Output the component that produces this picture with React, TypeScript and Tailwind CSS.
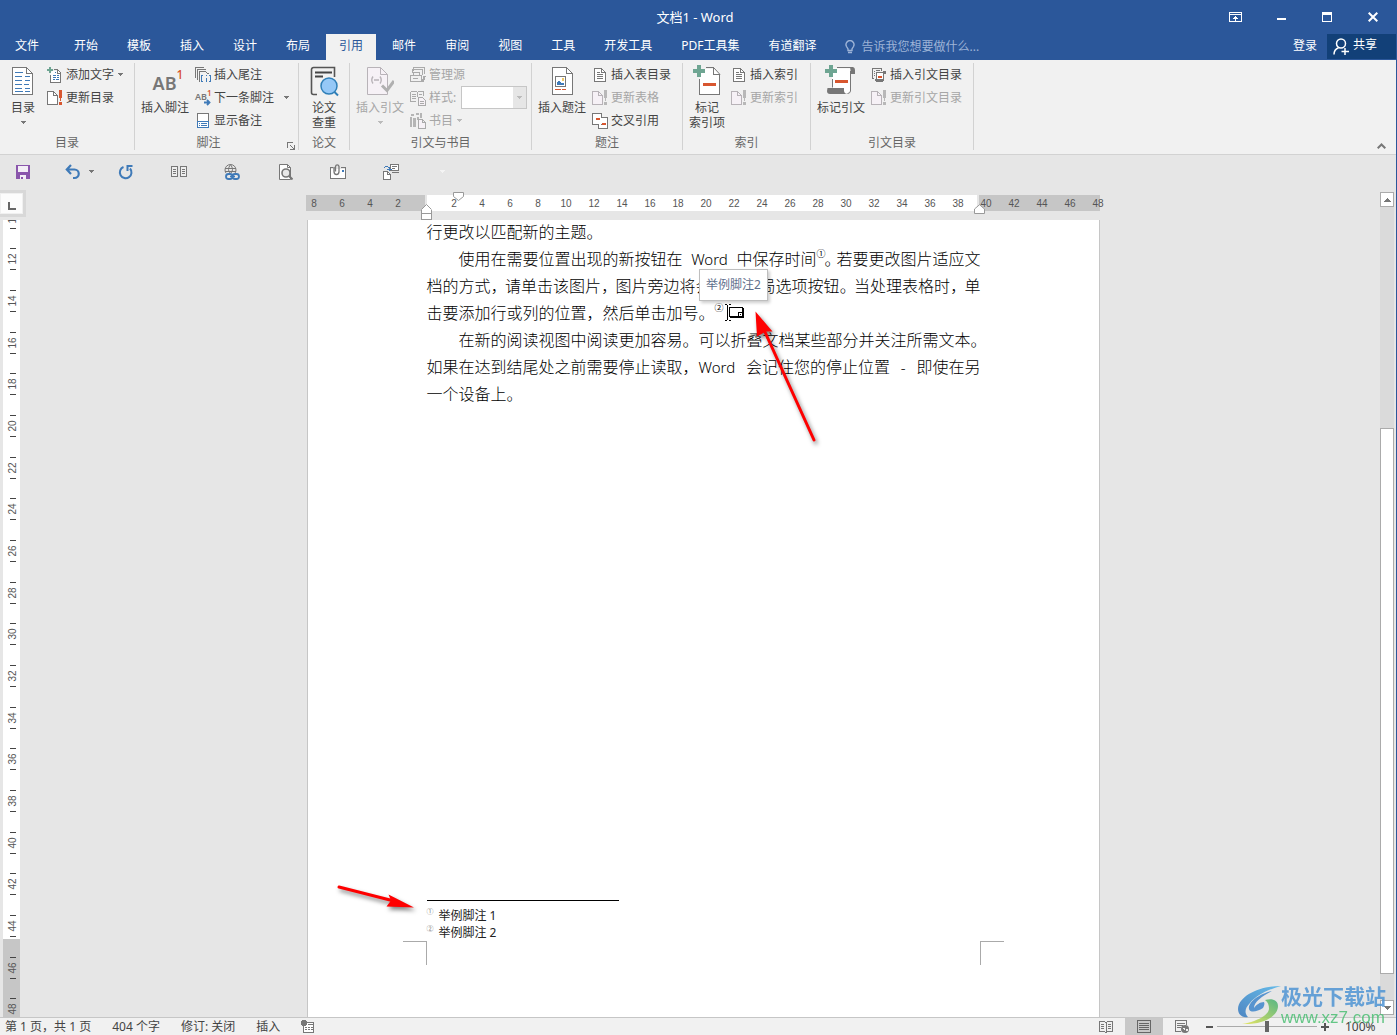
import type { ReactNode } from "react";
import clsx from "clsx";

const tabs = ["开始", "模板", "插入", "设计", "布局", "引用", "邮件", "审阅", "视图", "工具", "开发工具", "PDF工具集", "有道翻译"];

const GRAY = "#777777";
const DIM = "#b8b3b8";
const BLUE = "#3f7ab8";
const RED = "#d8562f";
const GREEN = "#6ea592";

/* ---------- shared bits ---------- */

function Svg({ w = 16, h = 16, smooth, className, children }: { w?: number; h?: number; smooth?: boolean; className?: string; children: ReactNode }) {
  return (
    <svg width={w} height={h} viewBox={`0 0 ${w} ${h}`} fill="none" shapeRendering={smooth ? "auto" : "crispEdges"} className={clsx("shrink-0", className)} aria-hidden="true">
      {children}
    </svg>
  );
}

function Caret({ className = "text-[#777]" }: { className?: string }) {
  return (
    <Svg w={5} h={3} className={className}>
      <path d="M0 0h5v1H4v1H3v1H2V2H1V1H0z" fill="currentColor" />
    </Svg>
  );
}

/* ---------- large ribbon icons ---------- */

const TocIcon = () => (
  <Svg w={22} h={30}>
    <path d="M.5 1.5H14.5L20.5 7.5V28.5H.5Z" fill="#fff" />
    <path d="M14.5 1.5H.5V28.5H20.5V7.5H14.5V1.5" stroke={GRAY} />
    <path d="M15 2l5.500 5.500" stroke={GRAY} shapeRendering="auto" />
    <path d="M3 6.5h8M3 10.5h7M3 14.5h7M3 18.5h7M3 22.5h7M3 25.5h8" stroke={BLUE} />
    <path d="M13 10.500h5M13 14.5h5M12 18.5h5M13 22.5h5M13 25.5h5" stroke={BLUE} />
  </Svg>
);

const FootnoteIcon = () => (
  <span className="flex h-[30px] items-center pl-1.5 leading-none">
    <span className="pt-1 text-[18px] font-semibold text-[#777]">AB</span>
    <span className="pb-3 text-[12px] font-medium text-[#d8512c]">1</span>
  </span>
);

const PaperCheckIcon = () => (
  <Svg w={30} h={32} smooth>
    <path d="M8 29.500H4.500a2 2 0 0 1-2-2V4.500a2 2 0 0 1 2-2H25.500V12" stroke="#555" strokeWidth="1.600" />
    <path d="M6 7.500h17M6 11.500h8" stroke="#444" strokeWidth="1.800" />
    <circle cx="20" cy="21" r="8" fill="#95c8f7" stroke="#2f7fb8" strokeWidth="1.500" />
    <path d="M25.500 27l3.500 3.500" stroke="#2f7fb8" strokeWidth="2" />
  </Svg>
);

const CitationIcon = () => (
  <Svg w={28} h={30} smooth>
    <path d="M1.500 1.500H14.500L21.500 8.500V28.500H1.500Z" fill="#f6f1f6" stroke={DIM} />
    <path d="M14.500 1.500V8.500H21.500" stroke={DIM} />
    <path d="M7 10.500q-2.500 3.500 0 7M14 10.500q2.500 3.500 0 7M8 14h5" stroke={DIM} strokeWidth="1.400" />
    <path d="M16 19.500l5 5 7-9.500" stroke="#b0b0b0" strokeWidth="3" />
  </Svg>
);

const CaptionIcon = () => (
  <Svg w={21} h={30}>
    <path d="M.5 1.500H14.500L20.500 7.500V28.500H.5Z" fill="#fff" />
    <path d="M14.500 1.500H.5V28.500H20.500V7.500H14.500V1.500" stroke={GRAY} />
    <path d="M15 2l5 5" stroke={GRAY} shapeRendering="auto" />
    <path d="M3.500 10.500h10v10h-10z" fill="#fff" stroke={GRAY} />
    <path d="M10 12h2v3h-2z" fill="#f0c765" />
    <path d="M5 19v-3h1v-1h2v1h1v1h3v2z" fill={BLUE} />
    <path d="M3 23.500h6M10 23.500h4" stroke={RED} />
  </Svg>
);

const MarkEntryIcon = () => (
  <Svg w={28} h={32}>
    <path d="M6.500 3.500H20.500L26.500 9.500V29.500H6.500Z" fill="#fff" />
    <path d="M13 2.500h7.500v7h6v20h-20V14" stroke={GRAY} />
    <path d="M21 3l6 6.500" stroke={GRAY} shapeRendering="auto" />
    <path d="M0 4h4V0h4v4h4v4H8v4H4V8H0z" fill={GREEN} />
    <path d="M10 18h13v3H10z" fill={RED} />
  </Svg>
);

const MarkCitationIcon = () => (
  <Svg w={32} h={32} smooth>
    <path d="M7 12V3.500H26V24a5 5 0 0 1-3 4.500H7z" fill="#fff" />
    <path d="M12 2.500H28M7.500 14v8.500M25.500 6V26a3 3 0 0 1-3 2.500" stroke={GRAY} />
    <path d="M25 2h3q2 .5 2 3v4h-4z" fill={GRAY} />
    <path d="M2.500 23H19v3q.5 3 3.500 3H5q-3 0-3-3z" fill={GRAY} />
    <path d="M0 4h4V0h4v4h4v4H8v4H4V8H0z" fill={GREEN} />
    <path d="M10 15h13v3H10z" fill={RED} />
  </Svg>
);

/* ---------- small ribbon icons ---------- */

const AddTextIcon = () => (
  <Svg>
    <path d="M5 4h6l3 3v8H3V9z" fill="#fff" />
    <path d="M7 2.500h3.500l3 3v10h-10V8M10.500 3v3h3" stroke={GRAY} />
    <path d="M0 2h2V0h2v2h2v2H4v2H2V4H0z" fill={GREEN} />
    <path d="M8 5.500h1M6 8.500h3M10 8.500h2M6 10.500h3M10 10.500h2M6 12.500h2M9 12.500h3" stroke={BLUE} />
  </Svg>
);

function UpdateIcon({ disabled }: { disabled?: boolean }) {
  const c = disabled ? DIM : GRAY;
  return (
    <Svg>
      <path d="M.5 1.500h6l4 4v9H.5z" fill={disabled ? "#f6f1f6" : "#fff"} stroke={c} />
      <path d="M6.500 1.500v4h4" stroke={c} />
      <path d="M12 0h3v5l-1 6h-1l-1-6zM12 12h3v2.500h-3z" fill={disabled ? "#b8b8b8" : RED} />
    </Svg>
  );
}

const EndnoteIcon = () => (
  <Svg>
    <path d="M.5 11V.5H9M2.500 13V2.500H11M4.500 15V4.500h6l3 2.500" stroke={GRAY} />
    <path d="M8 8.500H6.500v6H8M13.500 8.500H15.500v6H13.500M11 10.500v4M11 8v1" stroke={BLUE} />
  </Svg>
);

const NextNoteIcon = () => (
  <Svg smooth className="overflow-visible">
    <text x="0" y="10" fontSize="9" fontWeight="600" fill={GRAY}>AB</text>
    <text x="12" y="6" fontSize="8" fontWeight="600" fill={RED}>1</text>
    <path d="M9 12.500h6M12 10l2.500 2.500L12 15" stroke={BLUE} strokeWidth="1.800" />
  </Svg>
);

const ShowNotesIcon = () => (
  <Svg>
    <path d="M2.500.5h11v14h-11z" fill="#fff" stroke={GRAY} />
    <path d="M2 8.500h12M4 10.500h1M6 10.500h6M4 12.500h1M6 12.500h6M2 14.500h12M2.500 8v7M13.500 8v7" stroke={BLUE} />
  </Svg>
);

const SourcesIcon = () => (
  <Svg>
    <path d="M3.500 4V.5H14.500V7M2.500 6V2.500H12.500V8" stroke="#aaa" />
    <path d="M.5 14.500v-6h3v-3h6v3h2v6zM3 8.500h6M3 11.500h5" stroke="#aaa" />
    <path d="M13 9h3l-2 6h-2z" fill="#aaa" />
  </Svg>
);

const StyleIcon = () => (
  <Svg>
    <path d="M.5 1.500h6l1 1 1-1h5V6M.5 1.500v10H6M7.500 3v4M2 4.500h4M2 6.500h4M2 8.500h4M9 4.500h3" stroke="#aaa" />
    <path d="M8.500 7.500h4l3 3v5h-7z" fill="#f6f1f6" stroke="#aaa" />
    <path d="M10 11.500h4M10 13.500h4" stroke="#aaa" />
  </Svg>
);

const BibliographyIcon = () => (
  <Svg>
    <path d="M0 4h2v10H0zM3 5h3v9H3zM1 1h3v2H1zM6 0h3v2H6zM10 0h2v5h-2zM7 4h2v3H7z" fill="#b5b5b5" />
    <path d="M8.500 6.500h4l3 3v6h-7zM12.500 6.500v3h3" fill="#f6f1f6" stroke="#aaa" />
  </Svg>
);

const ListIcon = () => (
  <Svg>
    <path d="M2.500 1.500h7l4 4v9h-11z" fill="#fff" stroke={GRAY} />
    <path d="M9.500 1.500v4h4M5 5.500h3M5 7.500h6M5 9.500h6M5 11.500h6" stroke={GRAY} />
  </Svg>
);

const CrossRefIcon = () => (
  <Svg>
    <path d="M6.500 4.500h9v11h-9z" fill="#fff" stroke={GRAY} />
    <path d="M.5 .5h9v11h-9z" fill="#fff" stroke={GRAY} />
    <path d="M7 5h8v6H9v1H7z" fill="#fff" />
    <path d="M4 5h4v2H4zM10 10h4v2h-4z" fill={RED} />
  </Svg>
);

const AuthoritiesIcon = () => (
  <Svg>
    <path d="M3 11.500H1.500V1.500h9V4M3 4.500h1M3 6.500h1M3 8.500h1M5 3.500h4" stroke={GRAY} />
    <path d="M5.500 5.500h7v8h-7z" fill="#fff" stroke={GRAY} />
    <path d="M12 4h3v3h-2zM4 12h8v3H5z" fill={GRAY} />
    <path d="M7 9h4v2H7z" fill={RED} />
  </Svg>
);

/* ---------- ribbon ---------- */

function Group({ label, width, launcher, children }: { label: string; width: string; launcher?: boolean; children: ReactNode }) {
  return (
    <section className={clsx("flex shrink-0 flex-col border-r border-[#d2d2d2]", width)}>
      <div className="flex h-[73px] items-start gap-1.5 pl-1.5">{children}</div>
      <div className={clsx("relative text-center leading-[14px] text-[#666]", launcher && "pr-4")}>
        {label}
        {launcher && (
          <button aria-label={`${label}设置`} className="absolute right-[3px] bottom-0 leading-none">
            <Svg w={8} h={8}>
              <path d="M.5 6V.5H6M3 3l4 4M7 3v4.500H3" stroke={GRAY} />
            </Svg>
          </button>
        )}
      </div>
    </section>
  );
}

function Large({ icon, lines, caret, disabled }: { icon: ReactNode; lines: string[]; caret?: boolean; disabled?: boolean }) {
  return (
    <button disabled={disabled} className={clsx("flex flex-col items-center leading-[15px] whitespace-nowrap", disabled ? "text-[#a6a6a6]" : "text-[#444]")}>
      <span className="mt-0.5 mb-[3px] flex h-8 items-center">{icon}</span>
      {lines.map((l) => <span key={l}>{l}</span>)}
      {caret && <Caret className={clsx("mt-1.5", disabled ? "text-[#bbb]" : "text-[#777]")} />}
    </button>
  );
}

function Small({ icon, label, caret, disabled }: { icon: ReactNode; label: string; caret?: string; disabled?: boolean }) {
  return (
    <button disabled={disabled} className={clsx("flex h-[23px] items-center gap-[3px] whitespace-nowrap", disabled ? "text-[#a6a6a6]" : "text-[#444]")}>
      {icon}
      <span>{label}</span>
      {caret && <Caret className={caret} />}
    </button>
  );
}

function Ribbon() {
  return (
    <div className="flex h-[95px] border-b border-[#d2d2d2] bg-[#f1f1f1] pt-[3px] pb-1">
      <Group label="目录" width="w-[135px]">
        <div className="mr-1.5 ml-[5px]"><Large icon={<TocIcon />} lines={["目录"]} caret /></div>
        <div>
          <Small icon={<AddTextIcon />} label="添加文字" caret="text-[#777] ml-px" />
          <Small icon={<UpdateIcon />} label="更新目录" />
        </div>
      </Group>
      <Group label="脚注" width="w-[164px]" launcher>
        <Large icon={<FootnoteIcon />} lines={["插入脚注"]} />
        <div>
          <Small icon={<EndnoteIcon />} label="插入尾注" />
          <Small icon={<NextNoteIcon />} label="下一条脚注" caret="text-[#777] ml-[7px]" />
          <Small icon={<ShowNotesIcon />} label="显示备注" />
        </div>
      </Group>
      <Group label="论文" width="w-[51px]">
        <div className="ml-1"><Large icon={<PaperCheckIcon />} lines={["论文", "查重"]} /></div>
      </Group>
      <Group label="引文与书目" width="w-[182px]">
        <Large icon={<CitationIcon />} lines={["插入引文"]} caret disabled />
        <div>
          <Small icon={<SourcesIcon />} label="管理源" disabled />
          <div className="flex h-[23px] items-center gap-[3px] text-[#a6a6a6]">
            <StyleIcon />
            <label htmlFor="cite-style">样式:</label>
            <span className="relative ml-0.5">
              <select id="cite-style" disabled className="block h-[23px] w-[66px] appearance-none border border-[#c6c6c6] bg-white" />
              <span className="pointer-events-none absolute inset-y-px right-px flex w-[13px] items-center justify-center bg-[#e6e6e6]">
                <Caret className="text-[#bbb]" />
              </span>
            </span>
          </div>
          <Small icon={<BibliographyIcon />} label="书目" caret="text-[#bbb] ml-px" disabled />
        </div>
      </Group>
      <Group label="题注" width="w-[151px]">
        <Large icon={<CaptionIcon />} lines={["插入题注"]} />
        <div>
          <Small icon={<ListIcon />} label="插入表目录" />
          <Small icon={<UpdateIcon disabled />} label="更新表格" disabled />
          <Small icon={<CrossRefIcon />} label="交叉引用" />
        </div>
      </Group>
      <Group label="索引" width="w-[128px]">
        <Large icon={<MarkEntryIcon />} lines={["标记", "索引项"]} />
        <div>
          <Small icon={<ListIcon />} label="插入索引" />
          <Small icon={<UpdateIcon disabled />} label="更新索引" disabled />
        </div>
      </Group>
      <Group label="引文目录" width="w-[163px]">
        <Large icon={<MarkCitationIcon />} lines={["标记引文"]} />
        <div>
          <Small icon={<AuthoritiesIcon />} label="插入引文目录" />
          <Small icon={<UpdateIcon disabled />} label="更新引文目录" disabled />
        </div>
      </Group>
      <button aria-label="折叠功能区" className="mr-2.5 ml-auto self-end pb-px">
        <Svg w={9} h={6} smooth><path d="M.7 5.300l3.800-3.800 3.800 3.800" stroke={GRAY} strokeWidth="2" /></Svg>
      </button>
    </div>
  );
}

/* ---------- title bar and tabs ---------- */

function TitleBar() {
  const winButton = "flex h-[33px] w-[46px] items-center justify-center";
  return (
    <header className="bg-[#2b579a] text-white">
      <div className="grid h-[34px] grid-cols-[1fr_auto_1fr] items-center">
        <span />
        <h1 className="pt-0.5 pr-1.5 text-[13px]">文档1 - Word</h1>
        <div className="flex justify-end">
          <button aria-label="功能区显示选项" className={winButton}>
            <Svg w={13} h={10}><path d="M.5.5h12v9H.5zM0 2.500h13M6.500 4v5M5 5.500h3M4 6.500h5" stroke="#fff" /></Svg>
          </button>
          <button aria-label="最小化" className={winButton}>
            <span className="mt-1 h-0.5 w-[9px] bg-white" />
          </button>
          <button aria-label="最大化" className={winButton}>
            <span className="h-2.5 w-2.5 border border-t-[3px] border-white" />
          </button>
          <button aria-label="关闭" className={winButton}>
            <Svg w={10} h={10} smooth><path d="M.7.7l8.600 8.600M9.300.7L.7 9.300" stroke="#fff" strokeWidth="2" /></Svg>
          </button>
        </div>
      </div>
      <nav className="flex h-[26px]">
        <button className="mr-[7px] px-[15px] pb-0.5">文件</button>
        <div className="flex gap-[3px]">
          {tabs.map((t) => (
            <button key={t} className={clsx("px-[13px] pb-0.5 whitespace-nowrap", t === "引用" && "bg-[#f1f1f1] text-[#2b579a]")}>{t}</button>
          ))}
        </div>
        <label className="ml-4 flex items-center gap-1.5 text-[#9db3d7]">
          <Svg w={10} h={14} smooth>
            <path d="M3 10.500V9L1.500 6.500a4 4 0 1 1 7 0L7 9v1.500zM3 12.500h4" stroke="#9db3d7" strokeWidth="1.400" />
          </Svg>
          <input aria-label="告诉我您想要做什么" placeholder="告诉我您想要做什么..." className="w-36 bg-transparent outline-none placeholder:text-[#9db3d7]" />
        </label>
        <button className="mr-2.5 ml-auto pb-0.5">登录</button>
        <button className="mb-px flex w-[69px] items-center gap-1 bg-[#124078] pl-1.5">
          <Svg w={16} h={17} smooth>
            <circle cx="8" cy="5.500" r="4.500" stroke="#fff" strokeWidth="1.500" />
            <path d="M1 16.500q0-5 4.500-6.800M12 10v7M8.500 13.500H16" stroke="#fff" strokeWidth="1.500" />
          </Svg>
          <span className="pb-1">共享</span>
        </button>
      </nav>
    </header>
  );
}

function QuickAccess() {
  return (
    <div className="flex h-[35px] items-center gap-[34px] pb-0.5 pl-[15px]">
      <button aria-label="保存">
        <Svg>
          <path d="M1 1h14v14H1z" fill="#8a56ac" />
          <path d="M3 2h10v6H3zM5 11h6v4H5z" fill="#f3eef6" />
          <path d="M6 13h2v2H6z" fill="#8a56ac" />
        </Svg>
      </button>
      <div className="flex items-center gap-[37px]">
        <button aria-label="撤消" className="relative">
          <Svg smooth>
            <path d="M2 5.500H9.500a4 4 0 0 1 0 8.500H8M6 1L1.800 5.500 6 10" stroke={BLUE} strokeWidth="2.200" />
          </Svg>
          <span className="absolute top-1.5 left-6"><Caret /></span>
        </button>
        <button aria-label="重复">
          <Svg smooth>
            <path d="M5.500 3A5.800 5.800 0 1 0 12 4.500M9.500 7V2h5" stroke={BLUE} strokeWidth="2" />
          </Svg>
        </button>
        <button aria-label="阅读视图">
          <Svg>
            <path d="M.5 2.500h6v10h-6zM9.500 2.500h6v10h-6z" fill="#eee" stroke={GRAY} />
            <path d="M2 5.500h3M2 7.500h3M2 9.500h3M11 5.500h3M11 7.500h3M11 9.500h3" stroke={GRAY} />
          </Svg>
        </button>
        <button aria-label="超链接">
          <Svg smooth>
            <circle cx="6.500" cy="6" r="5.500" stroke={GRAY} />
            <path d="M1 4.500h11M1 7.500h11M6.500.5q-4 5.500 0 9M6.500.5q4 5.500 0 9" stroke={GRAY} />
            <path d="M1 9h15v7H1z" fill="#e6e6e6" />
            <rect x="2" y="10" width="6.500" height="5" rx="2.500" stroke={BLUE} strokeWidth="1.800" />
            <rect x="8.500" y="10" width="6.500" height="5" rx="2.500" stroke={BLUE} strokeWidth="1.800" />
            <path d="M6 12.500h5" stroke={BLUE} strokeWidth="1.500" />
          </Svg>
        </button>
        <button aria-label="打印预览">
          <Svg smooth>
            <path d="M2.500.5h8l3 3v12h-11z" fill="#fff" stroke={GRAY} />
            <path d="M10.500.5v3h3" stroke={GRAY} />
            <circle cx="9" cy="9" r="4" fill="#e9e9e9" stroke={GRAY} strokeWidth="1.600" />
            <path d="M12 12l3.500 3.500" stroke={GRAY} strokeWidth="2" />
          </Svg>
        </button>
        <button aria-label="附件">
          <Svg>
            <path d="M.5 4.500h15v10H.5z" fill="#fff" />
            <path d="M3 3.500H.5v11h15v-11H11" stroke={GRAY} />
            <path d="M4 3v4.500a2.500 3 0 0 0 5 0V2.500a1.800 2 0 0 0-3.500 0V7.500" stroke={GRAY} strokeWidth="1.300" shapeRendering="auto" />
            <path d="M12 6h2v2h-2z" fill={BLUE} />
          </Svg>
        </button>
        <button aria-label="交换">
          <Svg>
            <path d="M.5 7.500h4l3 3v5h-7zM7.500.5h8v6h-8z" fill="#fff" stroke={GRAY} />
            <path d="M4.500 7.500v3h3M9 2.500h5M9 4.500h3M9 8.500h7" stroke={GRAY} />
            <path d="M1 3.500q2-2 5 0v3M3.500 5h5" stroke={BLUE} />
          </Svg>
        </button>
        <span className="ml-1"><Caret className="text-[#f4f4f4]" /></span>
      </div>
    </div>
  );
}

/* ---------- rulers ---------- */

const hMarks = [8, 6, 4, 2, 0, ...Array.from({ length: 24 }, (_, i) => (i + 1) * 2)];
const vMarks = Array.from({ length: 20 }, (_, i) => 10 + i * 2);

function HorizontalRuler() {
  return (
    <div className="relative flex h-4 text-[10px] text-[#555]">
      <div className="w-[119px] bg-[#c6c6c6]" />
      <div className="mr-0.5 ml-0.5 flex-1 bg-white" />
      <div className="w-[121px] bg-[#c6c6c6]" />
      <div className="absolute inset-y-0 -left-1.5 flex items-center pt-0.5 font-[Liberation_Sans]">
        {hMarks.map((n, i) => <span key={i} className="w-7 text-center leading-4">{n || ""}</span>)}
      </div>
      <Svg w={11} h={16} className="absolute top-[9px] left-[115px]">
        <path d="M.5 15.500v-10l5-5 5 5v10z" fill="#fff" />
        <path d="M.5 5.500v10h10v-10M0 9.500h11" stroke="#999" />
        <path d="M.5 5.500l5-5 5 5" stroke="#999" shapeRendering="auto" />
      </Svg>
      <Svg w={11} h={10} className="absolute -top-1 left-[147px]" smooth>
        <path d="M.5 1.500h10v4L5.500 9.500l-5-4z" fill="#fff" stroke="#999" />
      </Svg>
      <Svg w={11} h={10} className="absolute top-[9px] right-[115px]" smooth>
        <path d="M.5 9.500v-4.500L5.500.7l5 4.300v4.500z" fill="#fff" stroke="#999" />
      </Svg>
    </div>
  );
}

function VerticalRuler() {
  return (
    <div className="flex w-[26px] shrink-0 flex-col">
      <div className="h-[27px] border-[3px] border-l-0 border-[#d8d8d8] bg-[#f0f0f0] p-px">
        <div className="flex h-full items-center justify-center bg-[#fcfcfc] pt-1">
          <span className="h-2 w-2 border-b-2 border-l-2 border-[#666]" />
        </div>
      </div>
      <div className="relative mt-[3px] ml-[3px] flex w-[17px] flex-1 flex-col overflow-hidden">
        <div className="flex-1 bg-white" />
        <div className="h-[78px] bg-[#c6c6c6]" />
        <div className="absolute inset-x-0 -top-[23px] flex h-[833px] flex-col font-[Liberation_Sans] text-[10px] text-[#555]">
          {vMarks.map((n) => (
            <div key={n} className="flex min-h-0 flex-1 flex-col items-center justify-center pl-0.5">
              <span className="h-px w-1.5 bg-[#444]" />
              <span className="flex h-5 items-center justify-center">
                <span className="-rotate-90 leading-none">{n}</span>
              </span>
              <span className="h-px w-1.5 bg-[#444]" />
            </div>
          ))}
        </div>
      </div>
    </div>
  );
}

/* ---------- document ---------- */

function Line({ indent, full, children }: { indent?: boolean; full?: boolean; children: ReactNode }) {
  return <div className={clsx("flex whitespace-nowrap", indent && "pl-8", full && "justify-between")}>{children}</div>;
}

const Tight = ({ children }: { children: string }) => <span className="w-[14px]">{children}</span>;
const Latin = ({ children }: { children: string }) => <span className="text-[15px]">{children}</span>;

function Arrow({ w, h, shaft, head, className }: { w: number; h: number; shaft: string; head: string; className: string }) {
  return (
    <Svg w={w} h={h} smooth className={clsx("pointer-events-none absolute overflow-visible drop-shadow-[2px_3px_2px_rgba(0,0,0,0.5)]", className)}>
      <path d={shaft} stroke="#fe0000" strokeWidth="3" strokeLinecap="round" />
      <path d={head} fill="#fe0000" />
    </Svg>
  );
}

function Page() {
  return (
    <article className="relative ml-px flex flex-1 flex-col border-x border-[#c6c6c6] bg-white text-black">
      <div className="mx-auto -mt-px w-[554px] text-base leading-[27px] font-light">
        <Line>行更改以匹配新的主题。</Line>
        <div>
          <Line indent full>
            <span>使用在需要位置出现的新按钮在</span>
            <Latin>Word</Latin>
            <span className="flex">
              中保存时间<sup className="top-0 w-2 text-[9px] leading-4 font-normal">①</sup><span className="w-3">。</span>若要更改图片适应文
            </span>
          </Line>
          <Line full>
            <span>档的方式</span><Tight>，</Tight><span>请单击该图片</span><Tight>，</Tight>
            <span>图片旁边将会出现布局选项按钮</span><Tight>。</Tight><span>当处理表格时</span><Tight>，</Tight><span>单</span>
          </Line>
          <Line>
            击要添加行或列的位置，然后单击加号。<sup className="top-0 w-2.5 text-[9px] leading-4 font-normal">②</sup>
            <Svg w={19} h={18} className="mt-1">
              <path d="M0 .5h2M4 .5h2M0 16.500h2M4 16.500h2M2.500 1v15" stroke="#000" />
              <path d="M4.500 3.500h13v9h-13z" fill="#fff" stroke="#000" />
              <path d="M5 13.500h13.500v-10M13.500 12V8.500h4M15 10.500h1" stroke="#000" />
            </Svg>
          </Line>
        </div>
        <div>
          <Line indent full>
            <span>在新的阅读视图中阅读更加容易。</span>
            <span className="flex">可以折叠文档某些部分并关注所需文本<span className="w-2.5">。</span></span>
          </Line>
          <Line full>
            <span>如果在达到结尾处之前需要停止读取，<Latin>Word</Latin></span>
            <span>会记住您的停止位置</span>
            <Latin>-</Latin>
            <span>即使在另</span>
          </Line>
          <Line>一个设备上。</Line>
        </div>
      </div>

      <div className="mx-auto mt-auto w-[554px] text-xs leading-[17px] text-[#222]">
        <hr className="mb-1.5 w-48 border-black" />
        <ol>
          <li className="flex gap-1.5"><span className="w-1.5 text-[7px] leading-[10px] text-[#777]">①</span>举例脚注 1</li>
          <li className="flex gap-1.5"><span className="w-1.5 text-[7px] leading-[10px] text-[#777]">②</span>举例脚注 2</li>
        </ol>
      </div>
      <div className="flex h-[76px] justify-between px-[95px]">
        <span className="h-6 w-6 border-t border-r border-[#aaa]" />
        <span className="h-6 w-6 border-t border-l border-[#aaa]" />
      </div>

      <div role="tooltip" className="absolute top-[49px] left-[391px] flex h-8 items-center border border-[#bebebe] bg-white px-1.5 text-xs text-[#5f6f8c] shadow-[2px_2px_3px_rgba(0,0,0,0.2)]">
        举例脚注2
      </div>
      <Arrow w={60} h={132} className="top-[91px] left-[447px]" shaft="M10 21L59 129" head="M.5 .5L17.500 20.500 11 20.500 2 25.500z" />
      <Arrow w={78} h={26} className="bottom-[106px] left-[29px]" shaft="M2 2L55 15.500" head="M77 22.500L51.500 9.500 54 15.500 49.500 21.500z" />
    </article>
  );
}

function ScrollBar() {
  const end = "flex h-[15px] items-center justify-center border border-[#ababab] bg-white";
  return (
    <div className="mr-0.5 flex w-[14px] shrink-0 flex-col bg-[#dadada]">
      <div className="h-0.5 bg-[#e6e6e6]" />
      <button aria-label="向上滚动" className={end}><span className="rotate-180"><Svg w={7} h={4}><path d="M0 0h7v1H6v1H5v1H4v1H3V3H2V2H1V1H0z" fill={GRAY} /></Svg></span></button>
      <div className="grow-[222]" />
      <div className="grow-[546] border border-[#ababab] bg-white" />
      <div className="grow-[26]" />
      <button aria-label="向下滚动" className={end}><Svg w={7} h={4}><path d="M0 0h7v1H6v1H5v1H4v1H3V3H2V2H1V1H0z" fill={GRAY} /></Svg></button>
      <div className="h-0.5 bg-[#e6e6e6]" />
    </div>
  );
}

function StatusBar() {
  return (
    <footer className="flex h-[18px] items-center border-t border-[#c6c6c6] bg-[#f1f1f1] whitespace-nowrap text-[#444]">
      <div className="flex items-center gap-[21px] pl-[5px]">
        <span>第 1 页，共 1 页</span>
        <span>404 个字</span>
        <span>修订: 关闭</span>
        <span>插入</span>
        <Svg w={13} h={13}>
          <path d="M6 2.500h6.500v10h-10V6" fill="#fff" stroke={GRAY} />
          <circle cx="3" cy="3" r="3" fill={GRAY} />
          <path d="M7 4.500h5M4 7.500h2M7 7.500h2M10 7.500h2M4 9.500h2M7 9.500h2M10 9.500h2" stroke={GRAY} />
        </Svg>
      </div>
      <div className="ml-auto flex h-full items-center">
        <button aria-label="阅读视图" className="mr-3">
          <Svg w={14} h={14}>
            <path d="M.5 1.500h5l1.500 1 1.500-1h5v10h-5L7 13l-1.500-1.500h-5zM7 3v10M2 4.500h3M2 6.500h3M2 8.500h3M9 4.500h3M9 6.500h3M9 8.500h3" stroke={GRAY} />
          </Svg>
        </button>
        <button aria-label="页面视图" className="flex h-full w-[38px] items-center justify-center bg-[#c8c8c8]">
          <Svg w={14} h={14}>
            <path d="M.5 .5h13v12H.5zM2 3.500h10M2 5.500h10M2 7.500h10M2 9.500h10" stroke="#666" />
          </Svg>
        </button>
        <button aria-label="Web 版式视图" className="ml-3">
          <Svg w={15} h={14}>
            <path d="M6 11.500H.5V.5h11V5M2 3.500h8M2 5.500h6M2 7.500h4" stroke={GRAY} />
            <circle cx="10" cy="9" r="4" fill={GRAY} shapeRendering="auto" />
            <path d="M8 8h2v2H9zM11 9h2v2h-2z" fill="#eee" />
          </Svg>
        </button>
        <button aria-label="缩小" className="ml-4 flex h-4 w-[7px] items-center"><span className="h-0.5 w-full bg-[#555]" /></button>
        <input
          type="range"
          aria-label="显示比例"
          min={0}
          max={200}
          defaultValue={100}
          className="mx-1 h-3 w-[100px] appearance-none bg-transparent [&::-webkit-slider-runnable-track]:h-px [&::-webkit-slider-runnable-track]:bg-[#aaa] [&::-webkit-slider-thumb]:-mt-[5px] [&::-webkit-slider-thumb]:h-[11px] [&::-webkit-slider-thumb]:w-1 [&::-webkit-slider-thumb]:appearance-none [&::-webkit-slider-thumb]:bg-[#666]"
        />
        <button aria-label="放大">
          <Svg w={8} h={8}><path d="M0 4h8M4 0v8" stroke="#555" strokeWidth="2" /></Svg>
        </button>
        <span className="ml-4 w-[51px]">100%</span>
      </div>
    </footer>
  );
}

function Watermark() {
  return (
    <div className="pointer-events-none absolute right-2.5 bottom-2 flex items-center leading-none opacity-85">
      <Svg w={44} h={42} smooth>
        <defs>
          <linearGradient id="wmBlue" x1="0" y1="1" x2="1" y2="0">
            <stop offset="0" stopColor="#3577bd" />
            <stop offset="1" stopColor="#4fb4ea" />
          </linearGradient>
          <linearGradient id="wmGreen" x1="0" y1="1" x2="1" y2="0">
            <stop offset="0" stopColor="#e6e34a" />
            <stop offset="1" stopColor="#3fae74" />
          </linearGradient>
        </defs>
        <path d="M44 1C24 1 2 10 1 24c0 6 5 9 10 8-4-4-3-9 2-14C19 11 29 5 44 1z" fill="url(#wmBlue)" />
        <path d="M35 6C22 9 11 17 12 24c1 4 8 3 14-1 1-2 2-4 1-6-4 0-8 3-10 6 0-6 8-12 18-17z" fill="#3f86cb" />
        <path d="M28 15c7-2 13 0 13 6 0 10-14 19-36 18 13-2 26-8 27-15 0-4-1-7-4-9z" fill="url(#wmGreen)" />
      </Svg>
      <div>
        <div className="text-[21px] font-bold text-[#4f94d4]">极光下载站</div>
        <div className="pt-0.5 font-[Liberation_Sans] text-[17px] text-[#4cbf74]">www.xz7.com</div>
      </div>
    </div>
  );
}

export default function App() {
  return (
    <div lang="zh-CN" className="relative flex min-h-screen flex-col border-r border-[#2b579a] bg-[#e6e6e6] font-['Noto_Sans','Noto_Sans_CJK_SC',sans-serif] text-xs text-[#444]">
      <TitleBar />
      <Ribbon />
      <QuickAccess />
      <main className="flex flex-1">
        <VerticalRuler />
        <div className="flex flex-1 justify-center">
          <div className="flex w-[794px] flex-col gap-[9px] pt-[5px]">
            <HorizontalRuler />
            <Page />
          </div>
        </div>
        <ScrollBar />
      </main>
      <StatusBar />
      <Watermark />
    </div>
  );
}
